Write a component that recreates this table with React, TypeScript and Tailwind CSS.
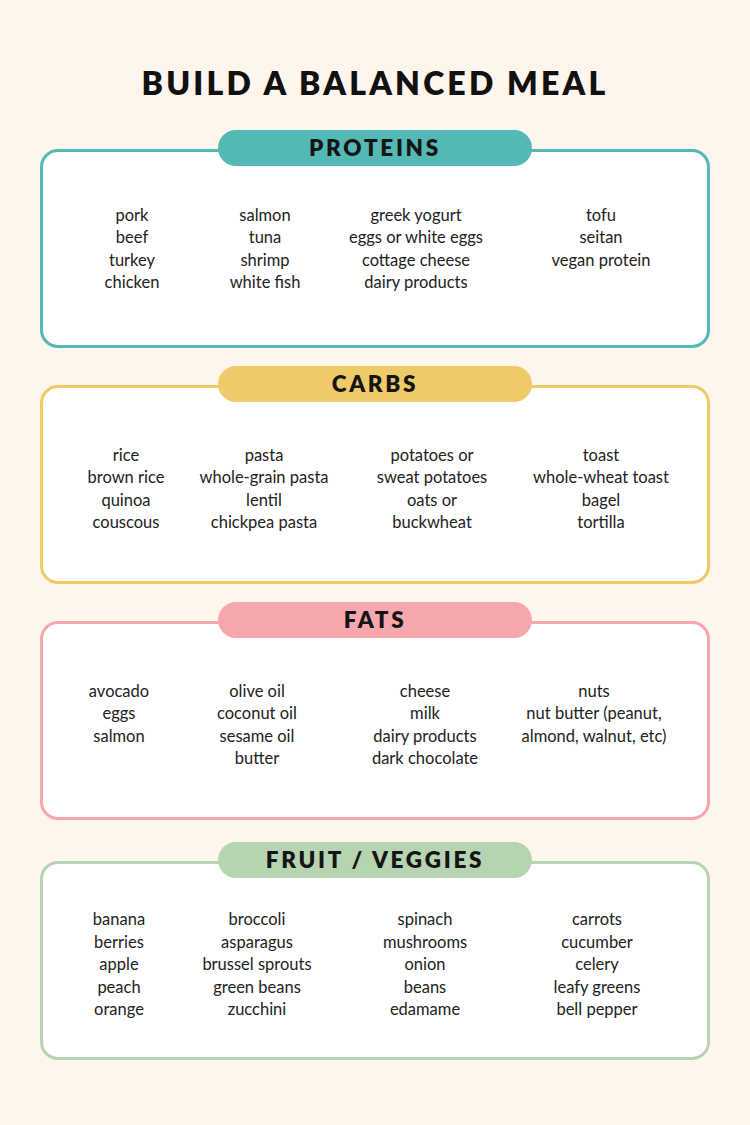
import React from "react";

type Group = {
  title: string;
  pill: string;
  border: string;
  cols: string;
  offset: string;
  gap: string;
  items: string[][];
};

const groups: Group[] = [
  {
    title: "PROTEINS",
    pill: "bg-[#54b9b5]",
    border: "border-[#54b9b5]",
    cols: "grid-cols-[144px_122px_180px_190px]",
    offset: "pt-0",
    gap: "mt-0",
    items: [
      ["pork", "beef", "turkey", "chicken"],
      ["salmon", "tuna", "shrimp", "white fish"],
      ["greek yogurt", "eggs or white eggs", "cottage cheese", "dairy products"],
      ["tofu", "seitan", "vegan protein"],
    ],
  },
  {
    title: "CARBS",
    pill: "bg-[#efca69]",
    border: "border-[#efca69]",
    cols: "grid-cols-[132px_144px_192px_146px]",
    offset: "pt-[8px]",
    gap: "mt-[18px]",
    items: [
      ["rice", "brown rice", "quinoa", "couscous"],
      ["pasta", "whole-grain pasta", "lentil", "chickpea pasta"],
      ["potatoes or", "sweat potatoes", "oats or", "buckwheat"],
      ["toast", "whole-wheat toast", "bagel", "tortilla"],
    ],
  },
  {
    title: "FATS",
    pill: "bg-[#f6a7ad]",
    border: "border-[#f6a7ad]",
    cols: "grid-cols-[118px_158px_178px_160px]",
    offset: "pt-[8px]",
    gap: "mt-[18px]",
    items: [
      ["avocado", "eggs", "salmon"],
      ["olive oil", "coconut oil", "sesame oil", "butter"],
      ["cheese", "milk", "dairy products", "dark chocolate"],
      ["nuts", "nut butter (peanut,", "almond, walnut, etc)"],
    ],
  },
  {
    title: "FRUIT / VEGGIES",
    pill: "bg-[#b6d4b1]",
    border: "border-[#b6d4b1]",
    cols: "grid-cols-[118px_158px_178px_166px]",
    offset: "pt-[8px]",
    gap: "mt-[22px]",
    items: [
      ["banana", "berries", "apple", "peach", "orange"],
      ["broccoli", "asparagus", "brussel sprouts", "green beans", "zucchini"],
      ["spinach", "mushrooms", "onion", "beans", "edamame"],
      ["carrots", "cucumber", "celery", "leafy greens", "bell pepper"],
    ],
  },
];

function Section({ group }: { group: Group }) {
  return (
    <div className={`flex flex-col ${group.gap}`}>
      <div
        className={`relative z-10 mx-auto flex h-[36px] w-[314px] items-center justify-center rounded-full ${group.pill}`}
      >
        <span className="text-[22.5px] font-extrabold leading-none tracking-[0.12em] text-[#151515]">
          {group.title}
        </span>
      </div>
      <div
        className={`-mt-[17px] flex h-[199px] items-center rounded-[18px] border-[3px] bg-white pl-[17px] ${group.border} ${group.offset}`}
      >
        <div className={`grid items-start ${group.cols}`}>
          {group.items.map((col, i) => (
            <div key={i} className="flex flex-col items-center text-center">
              {col.map((item) => (
                <span
                  key={item}
                  className="whitespace-nowrap text-[16.5px] leading-[22.5px] text-[#222222]"
                >
                  {item}
                </span>
              ))}
            </div>
          ))}
        </div>
      </div>
    </div>
  );
}

export default function App() {
  return (
    <div
      className="min-h-[1125px] w-[750px] bg-[#fef6ec] px-[40px] pt-[66px]"
      style={{ fontFamily: "Lato, 'Open Sans', Arial, sans-serif" }}
    >
      <h1 className="text-center text-[32px] font-extrabold leading-[34px] tracking-[0.1em] text-[#111111]">
        BUILD A BALANCED MEAL
      </h1>
      <div className="mt-[30px] flex flex-col">
        {groups.map((g) => (
          <Section key={g.title} group={g} />
        ))}
      </div>
    </div>
  );
}
